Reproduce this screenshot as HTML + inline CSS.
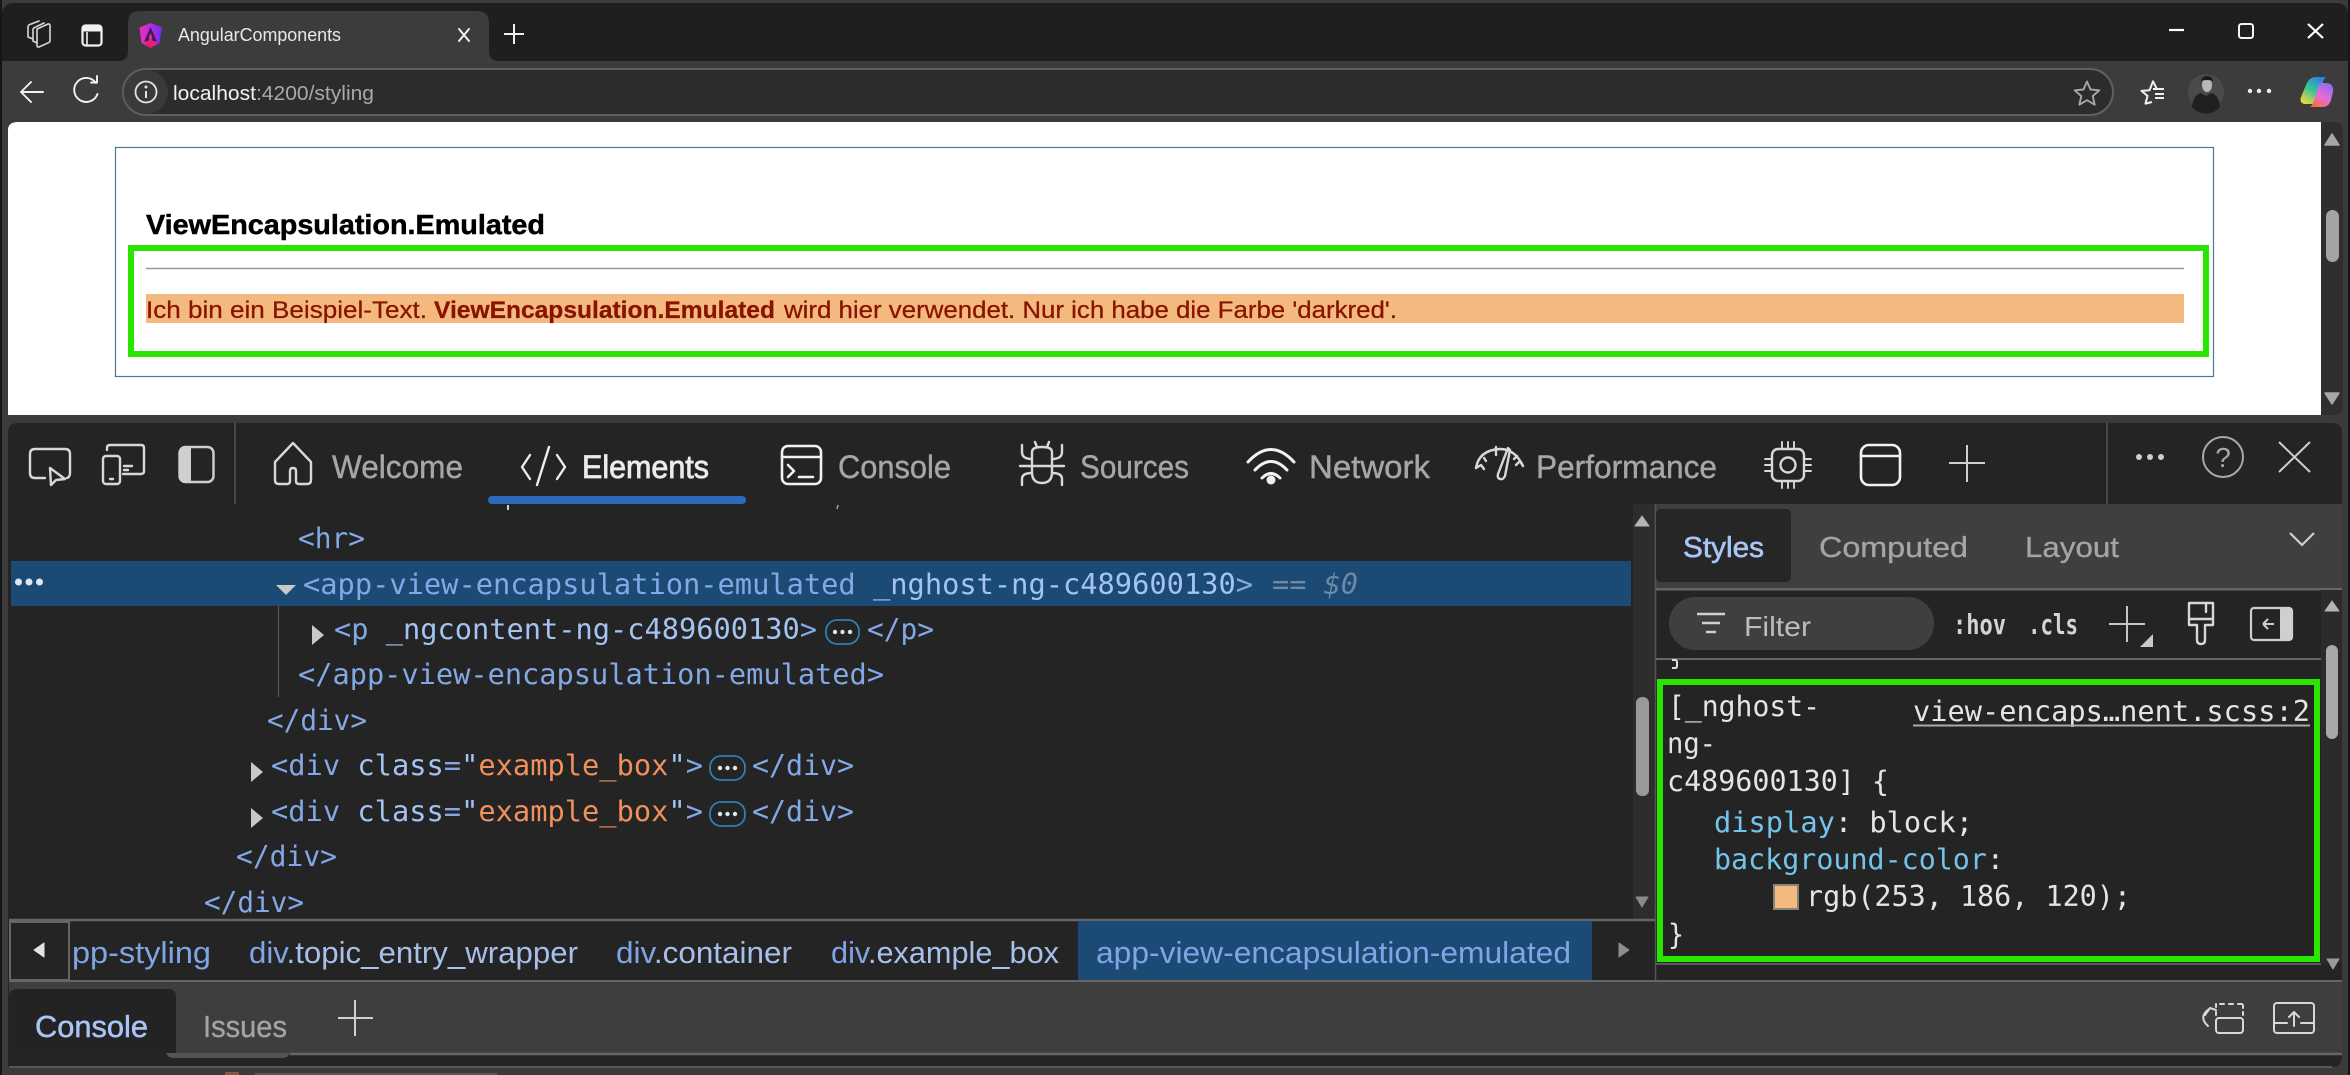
<!DOCTYPE html>
<html lang="en"><head><meta charset="utf-8"><title>AngularComponents</title>
<style>
html,body{margin:0;padding:0;background:#3b3b3b;width:2350px;height:1075px;overflow:hidden}
svg{display:block}
text{white-space:pre}
.s{font-family:"Liberation Sans",sans-serif}
.m{font-family:"DejaVu Sans Mono","Liberation Mono",monospace;font-size:28.5px}
.tab{font-family:"Liberation Sans",sans-serif;font-size:32px;fill:#a6a6a6;stroke:#a6a6a6;stroke-width:.4}
.tg{fill:#83a8e6}.at{fill:#a3c4f3}.vl{fill:#f0905c}
.crumb{font-family:"Liberation Sans",sans-serif;font-size:31px;fill:#a6bfeb}
.d{fill:#7fa5e6}
.ic{fill:none;stroke:#d8d8d8;stroke-width:2.4;stroke-linecap:round;stroke-linejoin:round}
.icw{fill:none;stroke:#f2f2f2;stroke-width:2.6;stroke-linecap:round;stroke-linejoin:round}
.css{fill:#e4e4e4}
.pr{fill:#72c4ec}
</style></head>
<body>
<svg width="2350" height="1075" viewBox="0 0 2350 1075" xmlns="http://www.w3.org/2000/svg">
<defs>
<linearGradient id="ng2" x1="0" y1="0" x2="1" y2="0"><stop offset="0" stop-color="#f02fc2"/><stop offset=".5" stop-color="#b02ce0"/><stop offset="1" stop-color="#7a2bf0"/></linearGradient>
<linearGradient id="cp1" x1=".8" y1="0" x2=".2" y2="1"><stop offset="0" stop-color="#2a7fe6"/><stop offset=".5" stop-color="#36c49a"/><stop offset="1" stop-color="#f2d63a"/></linearGradient>
<linearGradient id="cp2" x1=".8" y1="0" x2=".2" y2="1"><stop offset="0" stop-color="#8a6cf2"/><stop offset=".55" stop-color="#ea6bd8"/><stop offset="1" stop-color="#f2703a"/></linearGradient>
</defs>

<!-- window frame -->
<rect width="2350" height="1075" fill="#3b3b3b"/>
<rect x="0" y="0" width="2" height="1075" fill="#161616"/>
<rect x="2348" y="0" width="2" height="1075" fill="#161616"/>
<path d="M2 61V15Q2 3 14 3H2336Q2348 3 2348 15V61Z" fill="#1f1f1f"/>

<!-- tab -->
<path d="M118 61Q128 61 128 51V23Q128 11 140 11H477Q489 11 489 23V51Q489 61 499 61Z" fill="#3c3c3c"/>
<!-- workspaces icon -->
<g class="ic" style="stroke-width:1.6"><path d="M37 29l11-5q2-.5 2 2v15q0 1-1.500 1.700L39 47q-2 .4-2-1.500Z" /><path d="M37 43l-4-2V30q0-1.500 1-2.200L44 23"/><path d="M33 39l-5-2V27q0-1.500 1.200-2.200L39 21"/></g>
<!-- sidebar icon -->
<rect x="82.500" y="25.500" width="19" height="20" rx="3" fill="none" stroke="#f2f2f2" stroke-width="2.200"/>
<rect x="82.500" y="25.500" width="19" height="6" rx="2" fill="#f2f2f2"/>
<path d="M87 32V45" stroke="#f2f2f2" stroke-width="1.600"/>
<!-- favicon -->
<path d="M150.500 23L139.500 27.500L141.500 43L150.500 48L159.500 43L162 27.500Z" fill="url(#ng2)"/>
<path d="M150.500 27L144 42H148L150.500 35L153 42H157Z" fill="#4a1650"/>
<path d="M150.500 33L148.500 38H152.500Z" fill="#e0387a"/>
<path d="M144.500 41H156.500L154.500 45.500L150.500 48L146.500 45.500Z" fill="#f01b66"/>
<text x="178" y="41" class="s" font-size="18.500" fill="#e8e8e8" textLength="163" lengthAdjust="spacingAndGlyphs">AngularComponents</text>
<path d="M459 29L469 41M469 29L459 41" class="icw" style="stroke-width:2"/>
<path d="M514 24V44M504 34H524" stroke="#efefef" stroke-width="2" fill="none"/>

<!-- window controls -->
<path d="M2169 30H2184" stroke="#fff" stroke-width="2.200"/>
<rect x="2239" y="24" width="14" height="14" rx="2.500" fill="none" stroke="#f4f4f4" stroke-width="2"/>
<path d="M2308 24L2323 38M2323 24L2308 38" stroke="#fff" stroke-width="2.200"/>

<!-- toolbar -->
<rect x="2" y="61" width="2346" height="61" fill="#3c3c3c"/>
<path d="M43 92H21M21 92L31 82M21 92L31 102" class="icw" style="stroke-width:1.900"/>
<path d="M96 83A12 12 0 1 0 97.500 94" fill="none" stroke="#f2f2f2" stroke-width="1.900" stroke-linecap="round"/>
<path d="M91 82.500H97V76" fill="none" stroke="#f2f2f2" stroke-width="1.900" stroke-linecap="round" stroke-linejoin="round"/>
<rect x="123" y="69" width="1990" height="46" rx="23" fill="#2c2c2c" stroke="#5f5f5f" stroke-width="2"/>
<circle cx="146" cy="92" r="22" fill="#3a3a3a"/>
<circle cx="146" cy="92" r="10.500" fill="none" stroke="#e4e4e4" stroke-width="1.800"/>
<circle cx="146" cy="87" r="1.500" fill="#e4e4e4"/><path d="M146 91V98" stroke="#e4e4e4" stroke-width="2"/>
<text x="173" y="100" class="s" font-size="20.500" textLength="201" lengthAdjust="spacingAndGlyphs" fill="#a9a9a9"><tspan fill="#f2f2f2">localhost</tspan>:4200/styling</text>
<path d="M2087 81.500l3.500 8 8.800.8-6.600 5.800 2 8.600-7.700-4.500-7.700 4.500 2-8.600-6.600-5.800 8.800-.8Z" fill="none" stroke="#a6a6a6" stroke-width="1.900" stroke-linejoin="round"/>
<path d="M2152 102l-6.500 1.600 2-7.700-6-5 8-.6 3.500-9 3.500 7M2153 89h11M2155 94h9M2155 98h9" fill="none" stroke="#f0f0f0" stroke-width="2" stroke-linejoin="round"/>
<circle cx="2206" cy="92" r="18" fill="#4a4a4a"/>
<path d="M2192 107q1-12 9-14l5 3 5-3q8 2 9 14a18 18 0 0 1-28 0Z" fill="#202020"/>
<ellipse cx="2207" cy="85" rx="5" ry="7" fill="#b8b8b8"/><path d="M2201 81q1-5 6-5t6 5q-6-2-12 0Z" fill="#1a1a1a"/>
<circle cx="2250" cy="91" r="2.200" fill="#eee"/><circle cx="2259" cy="91" r="2.200" fill="#eee"/><circle cx="2269" cy="91" r="2.200" fill="#eee"/>
<path d="M2326 77H2316Q2309 77 2306 85L2301 97Q2299 104 2306 104L2311 104Q2316 104 2318 97L2322 85Q2323 80 2326 77Z" fill="url(#cp1)"/>
<path d="M2310 107H2322Q2329 107 2331 100L2333 92Q2334 83 2326 83L2322 83Q2319 83 2318 88L2314 100Q2313 105 2310 107Z" fill="url(#cp2)"/>

<!-- page -->
<path d="M8 415V130Q8 122 18 122H2321V415Z" fill="#fff"/>
<rect x="115.500" y="147.500" width="2098" height="229" fill="none" stroke="#4a7a92" stroke-width="1.200"/>
<text x="146" y="234" class="s" font-size="28" font-weight="700" fill="#000" stroke="#000" stroke-width=".5" textLength="399" lengthAdjust="spacingAndGlyphs">ViewEncapsulation.Emulated</text>
<path d="M146 268.500H2184" stroke="#9a9a9a" stroke-width="1.400"/>
<rect x="146" y="294" width="2038" height="29" fill="#f3b97f"/>
<g stroke="#8a1200" stroke-width=".25">
<text x="146" y="318" class="s" font-size="24" fill="#8a1200" textLength="281" lengthAdjust="spacingAndGlyphs">Ich bin ein Beispiel-Text.</text>
<text x="434" y="318" class="s" font-size="24" font-weight="700" fill="#8a1200" textLength="341" lengthAdjust="spacingAndGlyphs">ViewEncapsulation.Emulated</text>
<text x="784" y="318" class="s" font-size="24" fill="#8a1200" textLength="613" lengthAdjust="spacingAndGlyphs">wird hier verwendet. Nur ich habe die Farbe 'darkred'.</text>
</g>
<rect x="131" y="248" width="2075" height="106" fill="none" stroke="#29e500" stroke-width="6"/>

<!-- page scrollbar -->
<path d="M2321 122H2334Q2343 122 2343 131V406Q2343 415 2334 415H2321Z" fill="#2f2f2f"/>
<path d="M2332 134L2325 145H2339Z" fill="#a6a6a6" stroke="#a6a6a6" stroke-linejoin="round" stroke-width="1.500"/>
<path d="M2332 404L2325 393H2339Z" fill="#a6a6a6" stroke="#a6a6a6" stroke-linejoin="round" stroke-width="1.500"/>
<rect x="2326" y="210" width="13" height="52" rx="6.500" fill="#a4a4a4"/>

<!-- devtools -->
<path d="M8 1067V433Q8 423 18 423H2332Q2342 423 2342 433V1057Q2342 1067 2332 1067Z" fill="#242424"/>

<!-- main toolbar icons -->
<g class="ic">
<path d="M45 478H35q-5 0-5-5V454q0-5 5-5H65q5 0 5 5v19q0 4-3 5"/>
<path d="M50 468L51 485L56 480L65 479Z" fill="#242424"/>
<rect x="103" y="456" width="17" height="28" rx="3"/>
<path d="M107 450V448q0-3 3-3h31q3 0 3 3v23q0 3-3 3H123M124 466h8M124 470h4"/>
<path d="M110 479h3"/>
</g>
<rect x="179.500" y="447" width="34" height="35" rx="6" fill="none" stroke="#cfcfcf" stroke-width="2.400"/>
<path d="M185 447h6v35h-6q-6 0-6-6V453q0-6 6-6Z" fill="#cfcfcf"/>
<path d="M235 423V504" stroke="#555" stroke-width="1.500"/>
<path d="M293 443L275 462V480q0 4 4 4h8q3 0 3-3V471q0-3 3-3t3 3V481q0 3 3 3h8q4 0 4-4V462Z" class="ic"/>
<text x="332" y="478" class="tab" textLength="131" lengthAdjust="spacingAndGlyphs">Welcome</text>
<path d="M530 455L522 467L530 479M557 455L565 467L557 479M549 447L537 485" class="ic" style="stroke:#ececec"/>
<text x="582" y="478" class="tab" style="fill:#ececec;stroke:#ececec;stroke-width:.8" textLength="127" lengthAdjust="spacingAndGlyphs">Elements</text>
<rect x="488" y="496" width="258" height="8" rx="4" fill="#2d6abb"/>
<path d="M508 505V510" stroke="#cfcfcf" stroke-width="2"/>
<path d="M838 505L837 509" stroke="#83a8e6" stroke-width="1.500"/>
<rect x="782" y="446" width="39" height="38" rx="6" class="icw"/>
<path d="M782 457H821M788 465L794 471L788 477M799 477H813" class="icw"/>
<text x="838" y="478" class="tab" textLength="113" lengthAdjust="spacingAndGlyphs">Console</text>
<path d="M1032 452q0-5 10-5t10 5v20q0 11-10 11t-10-11ZM1037 447l-2-5M1047 447l2-5M1032 459q-10 0-10-7v-7M1052 459q10 0 10-7v-7M1020 466H1064M1032 473q-10 0-10 6v6M1052 473q10 0 10 6v6" class="ic"/>
<text x="1080" y="478" class="tab" textLength="109" lengthAdjust="spacingAndGlyphs">Sources</text>
<path d="M1248 462q23-25 46 0M1255 470q16-17 32 0M1262 478q9-9 18 0" class="icw" style="stroke-width:3"/>
<circle cx="1271" cy="480" r="4.500" fill="#f2f2f2"/>
<text x="1309" y="478" class="tab" textLength="121" lengthAdjust="spacingAndGlyphs">Network</text>
<path d="M1476 468q3-18 24-19q15 0 23 17M1484 458l2 3M1496 447v8M1517 456l-3 3" class="ic"/>
<path d="M1508 448l-10 26q-1 4 2 5t5-3l5-26ZM1476 468l5-3l3 4M1523 466l-3-5l-4 4" class="ic"/>
<text x="1536" y="478" class="tab" textLength="181" lengthAdjust="spacingAndGlyphs">Performance</text>
<rect x="1772" y="449" width="32" height="32" rx="6" class="ic"/>
<circle cx="1788" cy="465" r="7.500" class="ic"/>
<path d="M1782 442v7M1788 442v7M1794 442v7M1782 481v7M1788 481v7M1794 481v7M1765 459h7M1765 465h7M1765 471h7M1804 459h7M1804 465h7M1804 471h7" class="ic" style="stroke-width:1.900"/>
<rect x="1861" y="445" width="39" height="40" rx="8" class="icw"/>
<path d="M1861 456H1900" class="icw"/>
<path d="M1967 445V482M1949 463H1985" stroke="#d0d0d0" stroke-width="2" fill="none"/>
<path d="M2107 423V504" stroke="#555" stroke-width="1.500"/>
<circle cx="2139" cy="457" r="3" fill="#cfcfcf"/><circle cx="2150" cy="457" r="3" fill="#cfcfcf"/><circle cx="2161" cy="457" r="3" fill="#cfcfcf"/>
<circle cx="2223" cy="457" r="20" fill="none" stroke="#a8a8a8" stroke-width="2"/>
<text x="2223" y="467" class="s" font-size="28" fill="#a8a8a8" text-anchor="middle">?</text>
<path d="M2279 442L2310 472M2310 442L2279 472" stroke="#cfcfcf" stroke-width="2" fill="none"/>

<!-- elements panel -->
<text x="298" y="548" class="m tg" textLength="67" lengthAdjust="spacingAndGlyphs">&lt;hr&gt;</text>
<rect x="11" y="561" width="1620" height="45" fill="#1b4a75"/>
<circle cx="18.500" cy="582" r="3.500" fill="#dfe6ee"/><circle cx="29" cy="582" r="3.500" fill="#dfe6ee"/><circle cx="39.500" cy="582" r="3.500" fill="#dfe6ee"/>
<path d="M276 585H296L286 595Z" fill="#c8c8c8"/>
<text x="303" y="594" class="m" textLength="950" lengthAdjust="spacingAndGlyphs"><tspan class="tg">&lt;app-view-encapsulation-emulated</tspan> <tspan class="at">_nghost-ng-c489600130</tspan><tspan class="tg">&gt;</tspan></text>
<text x="1272" y="594" class="m" font-style="italic" fill="#6f8aa3" textLength="86" lengthAdjust="spacingAndGlyphs">== $0</text>
<path d="M278.500 606V697" stroke="#555" stroke-width="1.200"/>
<path d="M312 625L324 635L312 645Z" fill="#c8c8c8"/>
<text x="334" y="639" class="m" textLength="483" lengthAdjust="spacingAndGlyphs"><tspan class="tg">&lt;p</tspan> <tspan class="at">_ngcontent-ng-c489600130</tspan><tspan class="tg">&gt;</tspan></text>
<rect x="826" y="620" width="33" height="24" rx="11" fill="none" stroke="#2f7fb5" stroke-width="1.800"/>
<circle cx="835" cy="632" r="2.200" fill="#dfe6ee"/><circle cx="842.500" cy="632" r="2.200" fill="#dfe6ee"/><circle cx="850" cy="632" r="2.200" fill="#dfe6ee"/>
<text x="867" y="639" class="m tg" textLength="67" lengthAdjust="spacingAndGlyphs">&lt;/p&gt;</text>
<text x="298" y="684" class="m tg" textLength="586" lengthAdjust="spacingAndGlyphs">&lt;/app-view-encapsulation-emulated&gt;</text>
<text x="267" y="730" class="m tg" textLength="100" lengthAdjust="spacingAndGlyphs">&lt;/div&gt;</text>

<path d="M251 762L263 772L251 782Z" fill="#c8c8c8"/>
<text x="271" y="775" class="m" textLength="432" lengthAdjust="spacingAndGlyphs"><tspan class="tg">&lt;div</tspan> <tspan class="at">class</tspan><tspan class="tg">=</tspan><tspan class="at">"</tspan><tspan class="vl">example_box</tspan><tspan class="at">"</tspan><tspan class="tg">&gt;</tspan></text>
<rect x="710" y="756" width="35" height="24" rx="11" fill="none" stroke="#2f7fb5" stroke-width="1.800"/>
<circle cx="720" cy="768" r="2.200" fill="#dfe6ee"/><circle cx="727.500" cy="768" r="2.200" fill="#dfe6ee"/><circle cx="735" cy="768" r="2.200" fill="#dfe6ee"/>
<text x="752" y="775" class="m tg" textLength="102" lengthAdjust="spacingAndGlyphs">&lt;/div&gt;</text>

<path d="M251 808L263 818L251 828Z" fill="#c8c8c8"/>
<text x="271" y="821" class="m" textLength="432" lengthAdjust="spacingAndGlyphs"><tspan class="tg">&lt;div</tspan> <tspan class="at">class</tspan><tspan class="tg">=</tspan><tspan class="at">"</tspan><tspan class="vl">example_box</tspan><tspan class="at">"</tspan><tspan class="tg">&gt;</tspan></text>
<rect x="710" y="802" width="35" height="24" rx="11" fill="none" stroke="#2f7fb5" stroke-width="1.800"/>
<circle cx="720" cy="814" r="2.200" fill="#dfe6ee"/><circle cx="727.500" cy="814" r="2.200" fill="#dfe6ee"/><circle cx="735" cy="814" r="2.200" fill="#dfe6ee"/>
<text x="752" y="821" class="m tg" textLength="102" lengthAdjust="spacingAndGlyphs">&lt;/div&gt;</text>

<text x="236" y="866" class="m tg" textLength="101" lengthAdjust="spacingAndGlyphs">&lt;/div&gt;</text>
<text x="204" y="912" class="m tg" textLength="100" lengthAdjust="spacingAndGlyphs">&lt;/div&gt;</text>

<!-- elements scrollbar -->
<rect x="1633" y="504" width="22" height="415" fill="#2d2d2d"/>
<path d="M1642 516L1635 526H1649Z" fill="#b4b4b4" stroke="#b4b4b4" stroke-linejoin="round"/>
<path d="M1642 907L1636 897H1648Z" fill="#8a8a8a" stroke="#8a8a8a" stroke-linejoin="round"/>
<rect x="1636" y="697" width="13" height="99" rx="6" fill="#999"/>

<!-- styles panel -->
<rect x="1656" y="504" width="686" height="84" fill="#3f3f3f"/>
<path d="M1655.500 504V981" stroke="#555" stroke-width="1.500"/>
<rect x="1656" y="509" width="135" height="73" rx="5" fill="#262626"/>
<text x="1683" y="557" class="s" font-size="29" fill="#a9c5f7" stroke="#a9c5f7" stroke-width=".6" textLength="81" lengthAdjust="spacingAndGlyphs">Styles</text>
<text x="1819" y="557" class="s" font-size="29" fill="#a4a4a4" stroke="#a4a4a4" stroke-width=".35" textLength="149" lengthAdjust="spacingAndGlyphs">Computed</text>
<text x="2025" y="557" class="s" font-size="29" fill="#a4a4a4" stroke="#a4a4a4" stroke-width=".35" textLength="94" lengthAdjust="spacingAndGlyphs">Layout</text>
<path d="M2290 533L2302 545L2314 533" fill="none" stroke="#d0d0d0" stroke-width="2.200"/>
<rect x="1656" y="588" width="686" height="2.500" fill="#666"/>
<rect x="1669" y="597" width="265" height="53" rx="26" fill="#3f3f3f"/>
<path d="M1697 614H1725M1702 623H1720M1706 632H1716" stroke="#cfcfcf" stroke-width="2.400" fill="none"/>
<text x="1744" y="636" class="s" font-size="28" fill="#bdbdbd" textLength="67" lengthAdjust="spacingAndGlyphs">Filter</text>
<text x="1953" y="634" class="m" font-weight="700" fill="#d4d4d4" style="font-size:28px" textLength="53" lengthAdjust="spacingAndGlyphs">:hov</text>
<text x="2028" y="634" class="m" font-weight="700" fill="#d4d4d4" style="font-size:28px" textLength="50" lengthAdjust="spacingAndGlyphs">.cls</text>
<path d="M2127 606V642M2109 624H2145" stroke="#c8c8c8" stroke-width="2" fill="none"/>
<path d="M2153 634V647H2140Z" fill="#c8c8c8"/>
<path d="M2189 603H2213V625H2205V640q0 4-4 4t-4-4V625H2189ZM2189 619H2213M2206 604V612" class="ic"/>
<rect x="2251" y="608" width="41" height="32" rx="3" fill="none" stroke="#cfcfcf" stroke-width="2.200"/>
<rect x="2280" y="608" width="12" height="32" rx="2" fill="#cfcfcf"/>
<path d="M2274 624H2263M2263 624L2268 619M2263 624L2268 629" stroke="#cfcfcf" stroke-width="2" fill="none"/>
<rect x="2321" y="590" width="21" height="373" fill="#2b2b2b"/>
<path d="M2332 601L2325 611H2339Z" fill="#b4b4b4" stroke="#b4b4b4" stroke-linejoin="round"/>
<path d="M2333 969L2327 959H2339Z" fill="#9a9a9a" stroke="#9a9a9a" stroke-linejoin="round"/>
<rect x="2326" y="645" width="12" height="94" rx="6" fill="#a8a8a8"/>
<path d="M1656 659H2321" stroke="#666" stroke-width="2"/>
<path d="M1672 660h3q2 0 2 2v4q0 2-2 2h-3" stroke="#ddd" fill="none" stroke-width="2"/>
<rect x="1660" y="682" width="657" height="277" fill="none" stroke="#29e500" stroke-width="6"/>
<text x="1668" y="716" class="m css" textLength="152" lengthAdjust="spacingAndGlyphs">[_nghost-</text>
<text x="1667" y="753" class="m css" textLength="49" lengthAdjust="spacingAndGlyphs">ng-</text>
<text x="1667" y="791" class="m css" textLength="222" lengthAdjust="spacingAndGlyphs">c489600130] {</text>
<text x="1913" y="721" class="m css" textLength="397" lengthAdjust="spacingAndGlyphs">view-encaps…nent.scss:2</text>
<path d="M1913 725.500H2310" stroke="#aaa" stroke-width="2"/>
<text x="1714" y="832" class="m" textLength="259" lengthAdjust="spacingAndGlyphs"><tspan class="pr">display</tspan><tspan class="css">: block;</tspan></text>
<text x="1714" y="869" class="m" textLength="290" lengthAdjust="spacingAndGlyphs"><tspan class="pr">background-color</tspan><tspan class="css">:</tspan></text>
<rect x="1774" y="885" width="24" height="24" fill="#f3b97f" stroke="#8a8378" stroke-width="2"/>
<text x="1806" y="906" class="m css" textLength="325" lengthAdjust="spacingAndGlyphs">rgb(253, 186, 120);</text>
<text x="1668" y="944" class="m css" textLength="16" lengthAdjust="spacingAndGlyphs">}</text>
<path d="M1656 964H2321" stroke="#5a5a5a" stroke-width="2"/>

<!-- breadcrumbs -->
<path d="M9 920H1655" stroke="#666" stroke-width="2.400"/>
<rect x="10" y="922" width="59" height="58" fill="none" stroke="#666" stroke-width="2"/>
<path d="M34 950L44 943V957Z" fill="#e4e4e4" stroke="#e4e4e4" stroke-linejoin="round"/>
<text x="72" y="963" class="crumb" textLength="139" lengthAdjust="spacingAndGlyphs"><tspan class="d">pp-styling</tspan></text>
<text x="249" y="963" class="crumb" textLength="329" lengthAdjust="spacingAndGlyphs"><tspan class="d">div</tspan>.topic_entry_wrapper</text>
<text x="616" y="963" class="crumb" textLength="176" lengthAdjust="spacingAndGlyphs"><tspan class="d">div</tspan>.container</text>
<text x="831" y="963" class="crumb" textLength="228" lengthAdjust="spacingAndGlyphs"><tspan class="d">div</tspan>.example_box</text>
<rect x="1078" y="921" width="514" height="60" fill="#1b4a75"/>
<text x="1096" y="963" class="crumb" style="fill:#7fa5e6" textLength="475" lengthAdjust="spacingAndGlyphs">app-view-encapsulation-emulated</text>
<path d="M1629 950L1619 943V957Z" fill="#8e8e8e" stroke="#8e8e8e" stroke-linejoin="round"/>

<!-- drawer -->
<rect x="9" y="982" width="2333" height="71" fill="#3e3e3e"/>
<path d="M9 981H2342" stroke="#666" stroke-width="2"/>
<path d="M290 1054H2342" stroke="#666" stroke-width="2.500"/>
<path d="M9 1054V997Q9 989 17 989H168Q176 989 176 997V1054Z" fill="#232323"/>
<path d="M166 1053H290q-2 5-8 5H174q-6 0-8-5Z" fill="#555"/>
<text x="35" y="1037" class="s" font-size="31" fill="#a9c5f7" stroke="#a9c5f7" stroke-width=".5" textLength="113" lengthAdjust="spacingAndGlyphs">Console</text>
<text x="203" y="1037" class="s" font-size="31" fill="#a4a4a4" stroke="#a4a4a4" stroke-width=".35" textLength="84" lengthAdjust="spacingAndGlyphs">Issues</text>
<path d="M355 1000V1036M338 1018H373" stroke="#d0d0d0" stroke-width="2" fill="none"/>
<path d="M2209 1009q-11 8-1 17M2205 1015L2210 1008L2216 1010" class="ic" style="stroke-width:2"/>
<rect x="2216" y="1018" width="27" height="15" rx="3" class="ic" style="stroke-width:2"/>
<path d="M2220 1004h4M2229 1004h4M2238 1004h4M2243 1005v3M2243 1012v3M2216 1004v3M2216 1012v3" class="ic" style="stroke-width:2"/>
<rect x="2274" y="1003" width="40" height="30" rx="3" class="ic" style="stroke-width:2"/>
<path d="M2274 1023H2287M2301 1023H2314M2294 1026V1012M2294 1012L2289 1017M2294 1012L2299 1017" class="ic" style="stroke-width:2"/>
<path d="M9 1067H2332" stroke="#666" stroke-width="1.500"/>
<rect x="9" y="1068" width="2333" height="7" fill="#3a3a3a"/>
<rect x="225" y="1072" width="14" height="3" fill="#a8654a" opacity=".7"/>
<rect x="255" y="1073" width="242" height="2" fill="#777" opacity=".5"/>
</svg>
</body></html>
